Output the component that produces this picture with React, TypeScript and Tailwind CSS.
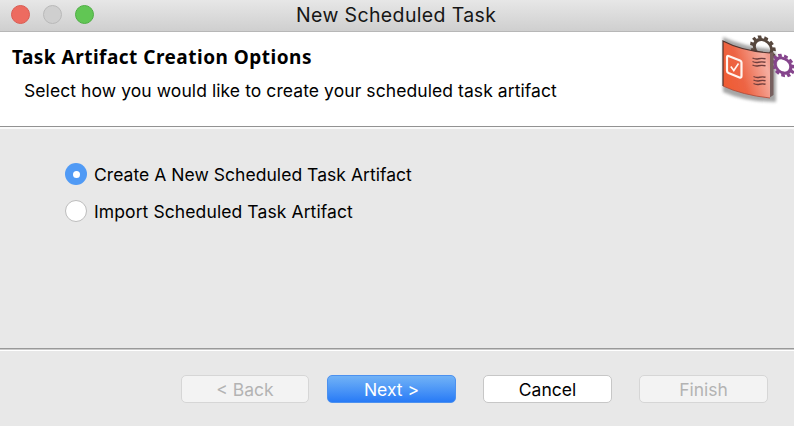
import React from "react";

function Gear({ cx, cy, r, color, teeth = 10 }: { cx: number; cy: number; r: number; color: string; teeth?: number }) {
  return (
    <g transform={`translate(${cx} ${cy}) rotate(42) scale(1.14 0.88)`} stroke={color} fill="none">
      <circle r={r} strokeWidth="3" />
      {Array.from({ length: teeth }, (_, i) => (
        <path key={i} d={`M0 ${-r - 1}V${-r - 4}`} strokeWidth="3.6" transform={`rotate(${(i * 360) / teeth + 14})`} />
      ))}
    </g>
  );
}

function TaskIcon() {
  return (
    <svg width="74" height="78" viewBox="720 32 74 78" className="shrink-0">
      <defs>
        <linearGradient id="panel" x1="0" y1="0.75" x2="1" y2="0.35">
          <stop offset="0" stopColor="#ef5a30" />
          <stop offset="0.4" stopColor="#ed6545" />
          <stop offset="0.9" stopColor="#f5ada0" />
          <stop offset="1" stopColor="#f09a8c" />
        </linearGradient>
        <filter id="shade" x="-30%" y="-30%" width="160%" height="160%">
          <feGaussianBlur stdDeviation="1.8" />
        </filter>
        <filter id="soft">
          <feGaussianBlur stdDeviation="0.45" />
        </filter>
      </defs>
      <path d="M723 37Q745 47 771 49L776 54V102Q745 102 723 92Z" fill="#777" opacity="0.65" filter="url(#shade)" />
      <g filter="url(#soft)">
        <Gear cx={763} cy={48} r={8.4} color="#57473e" teeth={11} />
        <Gear cx={783} cy={65.500} r={7.6} color="#85448c" teeth={11} />
        <path d="M769 53L773.500 52V95L769 98Z" fill="#77615e" />
        <path d="M723 41Q742 51 770 53V98Q742 95 723 86Z" fill="url(#panel)" />
        <path d="M723 86V41Q742 51 770 53" fill="none" stroke="#51332e" strokeWidth="1.2" />
        <path d="M723 86Q742 95 770 98" fill="none" stroke="#ad4939" strokeWidth="0.8" />
        <path d="M728.5 56L740 60.5Q741.5 61.2 741.5 62.5V76Q741.5 78.2 739.5 77.4L728.5 73Q727 72.3 727 70.8V57.5Q727 55.5 728.5 56Z" fill="none" stroke="#fff4ef" strokeWidth="2.2" />
        <path d="M730.8 66.5L733.8 70.5L738.5 63.5" fill="none" stroke="#fff4ef" strokeWidth="1.6" />
        <g fill="none" stroke="#6f3e3c" strokeWidth="1.4">
          <path d="M752.5 58q3 1.6 6 .8t7 0M752.5 61.500q3 1.6 6 .8t7 0M752.5 65q3 1.6 6 .8t7 0" />
          <path d="M753.5 76.500q3 1.6 6 .8t6 0M753.5 80q3 1.6 6 .8t6 0M753.5 83.500q3 1.6 6 .8t6 0" />
        </g>
      </g>
    </svg>
  );
}

export default function App() {
  return (
    <main className="flex h-[426px] w-[794px] flex-col overflow-hidden bg-[#e8e8e8] font-['Inter','Liberation_Sans',sans-serif] text-[17.5px] text-black">
      <header className="grid h-8 shrink-0 grid-cols-[296px_1fr] items-start border-b border-[#b7b7b7] bg-linear-to-b from-[#e7e7e7] to-[#cfcfcf]">
        <div className="flex gap-[13px] pt-[5px] pl-[11px]">
          <span className="size-[19px] rounded-full border border-[#d95c53] bg-[#ed6b60]" />
          <span className="size-[19px] rounded-full border border-[#b9b9b9] bg-[#cfcfcf]" />
          <span className="size-[19px] rounded-full border border-[#4fae45] bg-[#61c654]" />
        </div>
        <h1 className="text-[19.5px] leading-[30px] tracking-[0.36px] whitespace-nowrap text-[#161616]">New Scheduled Task</h1>
      </header>
      <section className="flex h-[94px] shrink-0 justify-between bg-white">
        <div className="pt-3 pl-3">
          <h2 className="font-['Noto_Sans',sans-serif] text-[19px] leading-[26px] font-bold tracking-[0.49px] whitespace-nowrap">Task Artifact Creation Options</h2>
          <p className="mt-[9px] pl-3 leading-6 tracking-[0.08px] whitespace-nowrap">Select how you would like to create your scheduled task artifact</p>
        </div>
        <TaskIcon />
      </section>
      <section className="h-[222px] shrink-0 border-t border-[#929292] pt-[35px] pl-[65px] shadow-[inset_0_2px_0_#fafafa]">
        <div className="flex h-6 items-center gap-[7px]">
          <span className="flex size-[22px] items-center justify-center rounded-full bg-[#509af5]"><span className="size-[7px] rounded-full bg-white" /></span>
          <span className="pt-[2px] tracking-[0.04px] whitespace-nowrap">Create A New Scheduled Task Artifact</span>
        </div>
        <div className="mt-[13px] flex h-6 items-center gap-[7px]">
          <span className="size-[22px] rounded-full border border-[#bdbdbd] bg-white" />
          <span className="pt-[2px] tracking-[0.1px] whitespace-nowrap">Import Scheduled Task Artifact</span>
        </div>
      </section>
      <footer className="h-[78px] shrink-0 border-t border-[#999] pt-[26px] pl-[181px] shadow-[inset_0_1px_0_#c9c9c9,inset_0_2px_0_#fff]">
        <div className="flex">
          <button className="h-7 w-[128px] rounded-[5px] border border-[#d6d6d6] bg-[#f3f3f3] pt-px text-[#b3b3b3]">&lt; Back</button>
          <button className="ml-[18px] h-7 w-[129px] rounded-[5px] border border-[#4c91ef] bg-linear-to-b from-[#71b2f6] to-[#277af6] pt-px text-white">Next &gt;</button>
          <button className="ml-[27px] h-7 w-[129px] rounded-[5px] border border-[#c7c7c7] bg-white pt-px">Cancel</button>
          <button className="ml-[27px] h-7 w-[129px] rounded-[5px] border border-[#d6d6d6] bg-[#f3f3f3] pt-px text-[#b3b3b3]">Finish</button>
        </div>
      </footer>
    </main>
  );
}
